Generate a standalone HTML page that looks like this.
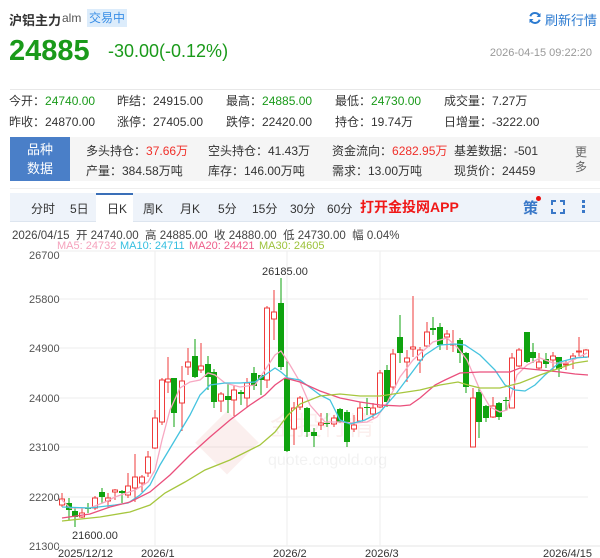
<!DOCTYPE html>
<html><head><meta charset="utf-8"><style>
*{margin:0;padding:0;box-sizing:border-box}
body{width:600px;height:558px;background:#fff;font-family:"Liberation Sans","Noto Sans CJK SC",sans-serif;color:#333;position:relative;overflow:hidden}
.a{position:absolute;white-space:nowrap}
.g{color:#1a9a1a}.r{color:#f0302a}
.row{font-size:12px;color:#333}
</style></head><body>
<div class="a" style="left:9px;top:10px;font-size:13px;font-weight:bold;color:#333">沪铝主力</div>
<div class="a" style="left:62px;top:11px;font-size:12px;color:#555">alm</div>
<div class="a" style="left:87px;top:9px;width:40px;height:18px;background:#dcecfb;color:#3a8ee6;font-size:12px;line-height:18px;text-align:center">交易中</div>
<svg class="a" style="left:528px;top:11px" width="14" height="14" viewBox="0 0 14 14"><path d="M11.5 5A5 5 0 0 0 2.3 5.2M2.5 9A5 5 0 0 0 11.7 8.8" fill="none" stroke="#2b7ad0" stroke-width="2"/><path d="M12.5 2v4h-4z M1.5 12v-4h4z" fill="#2b7ad0"/></svg>
<div class="a" style="left:545px;top:10px;font-size:13px;color:#2b7ad0">刷新行情</div>
<div class="a g" style="left:9px;top:35px;font-size:29px;font-weight:bold">24885</div>
<div class="a g" style="left:108px;top:41px;font-size:18px">-30.00(-0.12%)</div>
<div class="a" style="right:8px;top:47px;font-size:11px;color:#999">2026-04-15 09:22:20</div>
<div class="a" style="left:10px;top:89px;width:590px;height:1px;background:#e8e8e8"></div>
<div class="a row" style="left:9px;top:92px">今开：<span class="g">24740.00</span></div>
<div class="a row" style="left:117px;top:92px">昨结：24915.00</div>
<div class="a row" style="left:226px;top:92px">最高：<span class="g">24885.00</span></div>
<div class="a row" style="left:335px;top:92px">最低：<span class="g">24730.00</span></div>
<div class="a row" style="left:444px;top:92px">成交量：7.27万</div>
<div class="a row" style="left:9px;top:113px">昨收：24870.00</div>
<div class="a row" style="left:117px;top:113px">涨停：27405.00</div>
<div class="a row" style="left:226px;top:113px">跌停：22420.00</div>
<div class="a row" style="left:335px;top:113px">持仓：19.74万</div>
<div class="a row" style="left:444px;top:113px">日增量：-3222.00</div>
<div class="a" style="left:10px;top:137px;width:590px;height:44px;background:#f5f5f5"></div>
<div class="a" style="left:10px;top:137px;width:60px;height:44px;background:#4a7fc8;color:#fff;font-size:13px;line-height:19px;text-align:center;padding-top:3px;white-space:normal">品种<br>数据</div>
<div class="a row" style="left:86px;top:142px">多头持仓：<span class="r">37.66万</span></div>
<div class="a row" style="left:208px;top:142px">空头持仓：41.43万</div>
<div class="a row" style="left:332px;top:142px">资金流向：<span class="r">6282.95万</span></div>
<div class="a row" style="left:454px;top:142px">基差数据：-501</div>
<div class="a row" style="left:86px;top:162px">产量：384.58万吨</div>
<div class="a row" style="left:208px;top:162px">库存：146.00万吨</div>
<div class="a row" style="left:332px;top:162px">需求：13.00万吨</div>
<div class="a row" style="left:454px;top:162px">现货价：24459</div>
<div class="a" style="left:575px;top:145px;font-size:12px;color:#666;line-height:15px;white-space:normal;width:14px">更多</div>
<div class="a" style="left:10px;top:188px;width:590px;height:1px;background:#eee"></div>
<div class="a" style="left:10px;top:193px;width:590px;height:29px;background:#eef3fa;border-bottom:1px solid #dde5ef"></div>
<div class="a" style="left:96px;top:193px;width:37px;height:30px;background:#fff;border-top:2px solid #3a6fb8"></div>
<div class="a" style="top:200px;left:0;font-size:12px;color:#333;width:600px">
<span class="a" style="left:31px">分时</span><span class="a" style="left:70px">5日</span><span class="a" style="left:107px">日K</span><span class="a" style="left:143px">周K</span><span class="a" style="left:180px">月K</span><span class="a" style="left:218px">5分</span><span class="a" style="left:252px">15分</span><span class="a" style="left:290px">30分</span><span class="a" style="left:327px">60分</span></div>
<div class="a" style="left:360px;top:197px;font-size:14px;font-weight:bold;color:#f01818">打开金投网APP</div>
<div class="a" style="left:523px;top:197px;font-size:15px;color:#3a78c8;font-weight:bold">策</div>
<div class="a" style="left:536px;top:196px;width:5px;height:5px;border-radius:50%;background:#e81010"></div>
<svg class="a" style="left:551px;top:200px" width="14" height="14"><path d="M1 5V1h4M9 1h4v4M13 9v4H9M5 13H1V9" fill="none" stroke="#3a78c8" stroke-width="2"/></svg>
<div class="a" style="left:582px;top:200px;width:3px;height:3px;background:#3a78c8;box-shadow:0 5px 0 #3a78c8,0 10px 0 #3a78c8"></div>
<div class="a" style="left:12px;top:227px;font-size:11.5px;color:#444">2026/04/15&nbsp; 开 24740.00&nbsp; 高 24885.00&nbsp; 收 24880.00&nbsp; 低 24730.00&nbsp; 幅 0.04%</div>
<div class="a" style="left:57px;top:240px;font-size:11px"><span style="color:#f5a3bd">MA5: 24732</span></div>
<div class="a" style="left:120px;top:240px;font-size:11px"><span style="color:#35bfe0">MA10: 24711</span></div>
<div class="a" style="left:189px;top:240px;font-size:11px"><span style="color:#ee5d8a">MA20: 24421</span></div>
<div class="a" style="left:259px;top:240px;font-size:11px"><span style="color:#9cc23a">MA30: 24605</span></div>
<svg id="c" class="a" style="left:0;top:250px" width="600" height="308" viewBox="0 250 600 308"></svg>
<script>
var s='';
var ys=[[255,'26700'],[299,'25800'],[348,'24900'],[398,'24000'],[447,'23100'],[497,'22200'],[546,'21300']];
ys.forEach(function(a){if(a[0]!=255&&a[0]!=546)s+='<line x1="58" x2="588" y1="'+a[0]+'" y2="'+a[0]+'" stroke="#eee"/>';s+='<text x="29" y="'+(a[0]+4)+'" font-size="11" fill="#555" font-family="Liberation Sans">'+a[1]+'</text>';});
s+='<line x1="58" x2="600" y1="546" y2="546" stroke="#e4e4e4"/><line x1="58" x2="600" y1="251" y2="251" stroke="#eee"/>';
[155,287,380].forEach(function(x){s+='<line x1="'+x+'" x2="'+x+'" y1="251" y2="546" stroke="#eee"/>'});
s+='<g opacity="0.07"><rect x="205" y="420" width="45" height="45" transform="rotate(45 227 442)" fill="#d03020"/><text x="270" y="435" font-size="26" fill="#d03020" font-family="Noto Sans CJK SC">金投行情</text><text x="268" y="465" font-size="16" fill="#555" font-family="Liberation Sans">quote.cngold.org</text></g>';
var c=[[62,'r',499,505,493,507],[69,'g',503,510,498,520],[75,'g',511,517,507,527],[82,'r',513,517,508,518],[88,'g',508,509,503,513],[95,'r',498,508,496,510],[102,'g',492,497,488,503],[108,'r',498,501,493,507],[115,'r',490,492,489,500],[122,'g',491,493,490,503],[128,'r',486,495,473,498],[135,'r',477,488,454,502],[142,'r',477,483,475,492],[148,'r',457,473,451,477],[155,'r',418,448,410,449],[162,'r',380,422,378,425],[168,'r',379,382,357,393],[174,'g',378,413,378,427],[182,'r',381,403,366,431],[188,'r',362,367,348,375],[195,'g',356,377,339,378],[201,'r',366,370,343,373],[208,'g',364,377,356,390],[214,'g',372,402,369,408],[221,'r',394,401,392,412],[228,'g',396,400,383,413],[234,'r',390,400,386,416],[241,'g',392,394,390,405],[247,'r',383,398,378,407],[254,'g',373,386,367,390],[261,'g',375,380,375,395],[267,'r',308,380,306,388],[274,'r',312,319,290,340],[281,'g',303,367,278,370],[287,'g',378,451,360,452],[294,'r',408,429,402,445],[300,'r',398,407,396,410],
[307,'g',408,432,407,437],[314,'g',432,436,428,447],[321,'r',423,425,413,430],[327,'g',423,424,413,427],[334,'r',418,424,415,427],[340,'g',409,422,408,423],[347,'g',412,442,410,447],[354,'r',425,429,415,432],[360,'r',408,421,402,422],[367,'g',407,408,398,415],[373,'r',408,414,403,418],[380,'r',373,407,370,408],[387,'g',370,402,365,407],[393,'r',354,387,349,390],[400,'g',337,353,315,363],[407,'r',358,362,350,382],[413,'r',347,349,296,357],[420,'r',350,360,347,373],[427,'r',332,346,322,347],[433,'g',328,330,317,335],[440,'g',327,345,323,350],[447,'r',334,337,330,350],[453,'r',344,345,330,352],[460,'g',340,353,338,363],[466,'g',353,387,352,393],[473,'r',398,447,388,447],[479,'g',392,422,388,438],[486,'g',406,418,405,422],[493,'r',406,417,397,418],[499,'g',403,417,402,420],[506,'g',400,401,397,410],[512,'r',358,408,353,408],[519,'r',350,366,348,367],[527,'g',332,362,332,363],[533,'g',352,358,343,363],[539,'r',362,368,353,370],[546,'g',359,364,353,368],[553,'r',356,360,352,372],[559,'g',357,369,357,377],[566,'r',364,365,360,370],[573,'r',356,359,353,369],[579,'r',351,352,337,356],[586,'r',350,357,349,358]];
c.forEach(function(k){var col=k[1]=='r'?'#ef3b3b':'#0fa30f';s+='<line x1="'+k[0]+'" x2="'+k[0]+'" y1="'+k[4]+'" y2="'+k[5]+'" stroke="'+col+'"/>';var h=Math.max(k[3]-k[2],1);if(k[1]=='r')s+='<rect x="'+(k[0]-2.5)+'" y="'+k[2]+'" width="5" height="'+h+'" fill="#fff" stroke="'+col+'"/>';else s+='<rect x="'+(k[0]-3)+'" y="'+k[2]+'" width="6" height="'+h+'" fill="'+col+'"/>';});
function pl(p,col){s+='<polyline fill="none" stroke="'+col+'" stroke-width="1.3" points="'+p+'"/>'}
pl('62,500 70,508 90,508 105,502 115,497 135,490 148,482 155,470 162,440 170,410 180,388 190,382 200,380 208,373 215,375 225,383 240,387 255,385 265,370 275,355 281,351 290,365 300,382 310,405 325,422 340,422 355,423 367,422 377,417 387,403 400,377 413,360 433,342 447,338 457,347 467,360 480,390 490,407 500,412 507,410 517,375 527,365 540,358 553,363 567,363 587,353','#f7a8c2');
pl('62,507 90,508 115,505 128,503 140,495 150,485 160,465 175,440 190,415 200,395 210,385 225,383 240,383 255,382 265,375 275,368 281,372 288,378 300,380 320,395 330,400 340,420 350,424 365,420 380,412 395,395 410,375 425,355 440,345 455,344 465,345 480,355 495,370 505,385 515,390 525,391 535,385 545,375 560,362 575,358 588,357','#45c3df');
pl('62,518 90,514 110,507 130,502 150,492 170,475 190,455 210,437 230,420 250,405 265,395 275,385 285,378 300,382 320,391 340,398 360,402 380,405 400,406 410,405 420,398 435,385 445,380 460,373 480,372 510,372 520,368 540,370 560,372 575,374 588,375','#ea4f7c');
pl('62,521 100,517 130,512 150,505 165,493 185,482 205,470 230,460 260,445 275,432 288,415 300,404 320,396 340,394 360,396 380,396 400,393 420,390 440,385 458,382 468,385 480,388 500,388 520,383 540,375 560,368 575,363 588,361','#a6c63e');
s+='<text x="262" y="275" font-size="11" fill="#333" font-family="Liberation Sans">26185.00</text><text x="72" y="539" font-size="11" fill="#333" font-family="Liberation Sans">21600.00</text>';
[[58,'2025/12/12'],[141,'2026/1'],[273,'2026/2'],[365,'2026/3'],[543,'2026/4/15']].forEach(function(a){s+='<text x="'+a[0]+'" y="557" font-size="11" fill="#333" font-family="Liberation Sans">'+a[1]+'</text>'});
document.getElementById('c').innerHTML=s;
</script>
</body></html>
